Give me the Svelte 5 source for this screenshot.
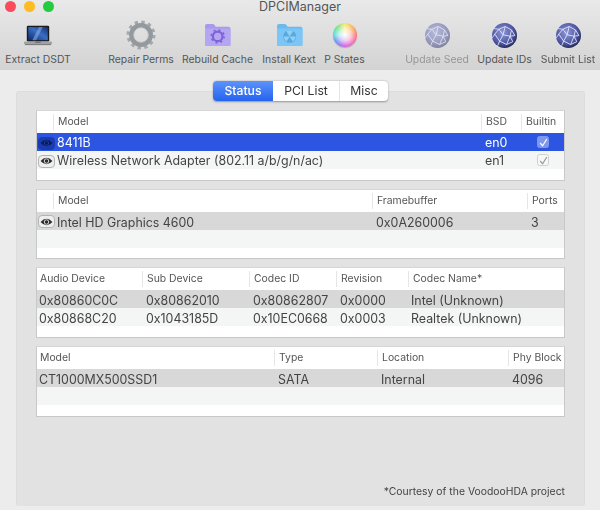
<script>
  const tools = [
    { id: 'laptop', label: 'Extract DSDT', cls: 'w1' },
    { id: 'gear', label: 'Repair Perms', cls: 'w2' },
    { id: 'folderp', label: 'Rebuild Cache', cls: 'w3' },
    { id: 'folderb', label: 'Install Kext', cls: 'w4' },
    { id: 'wheel', label: 'P States', cls: 'w5' },
    { id: 'globe', label: 'Update Seed', cls: 'w6', off: true },
    { id: 'globe', label: 'Update IDs', cls: 'w7' },
    { id: 'globe', label: 'Submit List', cls: 'w8' }
  ];
  const tables = [
    { cls: 't1', head: ['', 'Model', 'BSD', 'Builtin'], rows: [
      { kind: 'sel', cells: ['eye', '8411B', 'en0', 'check'] },
      { kind: 'alt', cells: ['eye', 'Wireless Network Adapter (802.11 a/b/g/n/ac)', 'en1', 'check'] }
    ] },
    { cls: 't2', head: ['', 'Model', 'Framebuffer', 'Ports'], rows: [
      { kind: 'grey', cells: ['eye', 'Intel HD Graphics 4600', '0x0A260006', '3'] },
      { kind: 'alt', cells: [] }
    ] },
    { cls: 't3', head: ['Audio Device', 'Sub Device', 'Codec ID', 'Revision', 'Codec Name*'], rows: [
      { kind: 'grey', cells: ['0x80860C0C', '0x80862010', '0x80862807', '0x0000', 'Intel (Unknown)'] },
      { kind: 'alt', cells: ['0x80868C20', '0x1043185D', '0x10EC0668', '0x0003', 'Realtek (Unknown)'] }
    ] },
    { cls: 't4', head: ['Model', 'Type', 'Location', 'Phy Block'], rows: [
      { kind: 'grey', cells: ['CT1000MX500SSD1', 'SATA', 'Internal', '4096'] },
      { kind: 'alt', cells: [] }
    ] }
  ];
  const globeLines = 'M10 9 L19 5 L28 10 L26 19 L16 17 Z M16 17 L11 26 L21 31 L26 19 M10 9 L4 16 L11 26 M28 10 L33 18 L26 19 M21 31 L30 27 L26 19 M19 5 L16 17 M10 9 L2 8 M4 16 L0 22 M11 26 L8 33';
</script>

{#snippet icon(id)}
  {#if id === 'laptop'}
    <svg class="ic" width="28" height="21" viewBox="0 0 30 22">
      <defs>
        <linearGradient id="scr" x1="0" y1="1" x2="1" y2="0">
          <stop offset="0" stop-color="#0d2a6b" /><stop offset=".55" stop-color="#3a6fc4" /><stop offset="1" stop-color="#16306e" />
        </linearGradient>
      </defs>
      <rect x="3" y="0.5" width="24" height="17" rx="1.5" fill="#1b1b1f" />
      <rect x="4.5" y="2" width="21" height="14" fill="url(#scr)" />
      <path d="M9 16 L16 2 H20 L13 16 Z" fill="#8fb0e6" opacity=".55" />
      <rect x="0" y="17.5" width="30" height="3" rx="1.2" fill="#a2a2a4" />
      <rect x="12" y="17.5" width="6" height="1.4" fill="#6e6e70" />
      <rect x="1" y="20.3" width="28" height="1" fill="#6f6f70" />
    </svg>
  {:else if id === 'gear'}
    <svg class="ic" width="30" height="30" viewBox="0 0 32 32">
      <circle cx="16" cy="16" r="13" fill="none" stroke="#a4a9ad" stroke-width="5" stroke-dasharray="3.4 3.4" />
      <circle cx="16" cy="16" r="10.2" fill="none" stroke="#94999d" stroke-width="5" />
      <circle cx="16" cy="16" r="7.6" fill="none" stroke="#cfd2d4" stroke-width="1" />
    </svg>
  {:else if id === 'folderp' || id === 'folderb'}
    {@const purple = id === 'folderp'}
    <svg class="ic" width="29" height="24" viewBox="0 0 29 26">
      <path d="M1 3 Q1 1 3 1 H9 Q10.5 1 11.5 2.5 L12.5 4 H26.5 Q28.5 4 28.5 6 V23.5 Q28.5 25 27 25 H2.5 Q1 25 1 23.5 Z" fill={purple ? '#a899ec' : '#6db9ef'} />
      <path d="M1 6 H28.5 V23.5 Q28.5 25 27 25 H2.5 Q1 25 1 23.5 Z" fill={purple ? '#b5a6f4' : '#7cc6f7'} />
      {#if purple}
        <circle cx="14.7" cy="14.5" r="5.2" fill="none" stroke="#7e63d6" stroke-width="2.4" />
        <circle cx="14.7" cy="14.5" r="7" fill="none" stroke="#7e63d6" stroke-width="1.8" stroke-dasharray="2.2 3.3" />
      {:else}
        <circle cx="14.7" cy="14.5" r="7" fill="#5aa8dc" />
        <path d="M14.7 14.5 L11 9 A6.5 6.5 0 0 1 18.4 9 Z M14.7 14.5 L21.2 14.5 A6.5 6.5 0 0 1 18 20 Z M14.7 14.5 L11.4 20 A6.5 6.5 0 0 1 8.2 14.5 Z" fill="#8fd0f7" />
      {/if}
    </svg>
  {:else if id === 'wheel'}
    <div class="ic wheel"></div>
  {:else}
    <svg class="ic" width="25" height="25" viewBox="0 0 36 36">
      <defs>
        <radialGradient id="gl" cx=".42" cy=".38" r=".68">
          <stop offset="0" stop-color="#8f97d8" /><stop offset=".65" stop-color="#4f57a4" /><stop offset="1" stop-color="#1c2048" />
        </radialGradient>
        <clipPath id="gc"><circle cx="18" cy="18" r="18" /></clipPath>
      </defs>
      <circle cx="18" cy="18" r="18" fill="url(#gl)" />
      <path d={globeLines} clip-path="url(#gc)" fill="none" stroke="#eceefa" stroke-width="1.2" />
    </svg>
  {/if}
{/snippet}

<div class="win">
  <header class="top">
    <div class="titlebar">
      <span class="dot red"></span><span class="dot yellow"></span><span class="dot green"></span>
      <span class="title">DPCIManager</span>
    </div>
    <div class="toolbar">
      {#each tools as t}
        <div class="tool {t.cls}" class:off={t.off}>
          <div class="iconbox">{@render icon(t.id)}</div>
          <span>{t.label}</span>
        </div>
      {/each}
    </div>
  </header>

  <main class="body">
    <div class="tabs">
      <span class="tab active st">Status</span>
      <span class="tab pci">PCI List</span>
      <span class="tab misc">Misc</span>
    </div>
    <section class="panel">
      {#each tables as tb}
        <div class="table {tb.cls}">
          <div class="head">
            {#each tb.head as h, i}
              <div class="hc" class:sep={i > 0}>{h}</div>
            {/each}
          </div>
          {#each tb.rows as r}
            <div class="row {r.kind}">
              {#each r.cells as c}
                {#if c === 'eye'}
                  <div class="eyecell">
                    <span class="eyebtn">
                      <svg width="13" height="8" viewBox="0 0 14 9">
                        <path d="M0.3 4.5 Q7 -2.8 13.7 4.5 Q7 11.8 0.3 4.5 Z" fill="currentColor" />
                        <circle cx="7" cy="4.5" r="2.5" fill="none" stroke="var(--eye-bg)" stroke-width="1" />
                      </svg>
                    </span>
                  </div>
                {:else if c === 'check'}
                  <div class="checkcell">
                    <span class="check">
                      <svg width="9" height="9" viewBox="0 0 9 9"><path d="M1.2 5 L3.6 7.8 L7.8 1" fill="none" stroke="currentColor" stroke-width="1.2" /></svg>
                    </span>
                  </div>
                {:else}
                  <div class="cell">{c}</div>
                {/if}
              {/each}
            </div>
          {/each}
        </div>
      {/each}
      <p class="note">*Courtesy of the VoodooHDA project</p>
    </section>
  </main>
</div>

<style>
  :global(body) { margin: 0; background: #ececec; }
  .win {
    width: 600px; height: 510px; overflow: hidden; display: flex; flex-direction: column;
    font-family: Inter, "Liberation Sans", sans-serif; color: #3c3c3c; filter: blur(0.35px);
  }
  .top {
    height: 70px; flex: none; background: linear-gradient(#e9e9e9, #d3d3d3);
    display: flex; flex-direction: column;
  }
  .titlebar { height: 16px; display: flex; align-items: center; gap: 8px; padding: 0 0 4px 5px; position: relative; box-sizing: border-box; flex: none; }
  .dot { width: 11px; height: 11px; border-radius: 50%; flex: none; }
  .red { background: #fb4a5c; }
  .yellow { background: #fdbb24; }
  .green { background: #22cc3f; }
  .title { position: absolute; left: 0; right: 0; top: 0; text-align: center; font-size: 12.5px; line-height: 14px; color: #555; }
  .toolbar { display: flex; padding-left: 5px; flex: 1; }
  .tool { display: flex; flex-direction: column; align-items: center; flex: none; font-size: 10.4px; color: #555; white-space: nowrap; }
  .tool.off { opacity: .5; }
  .iconbox { height: 37px; display: flex; align-items: center; justify-content: center; padding-top: 1px; box-sizing: border-box; }
  .tool span { line-height: 14px; }
  .ic { display: block; }
  .w1 { width: 66px; margin-right: 37px; }
  .w2 { width: 66px; margin-right: 8px; }
  .w3 { width: 71px; margin-right: 9px; }
  .w4 { width: 54px; margin-right: 8px; }
  .w5 { width: 41px; margin-right: 40px; }
  .w6 { width: 64px; margin-right: 8px; }
  .w7 { width: 55px; margin-right: 8px; }
  .w8 { width: 56px; }
  .wheel {
    width: 24px; height: 24px; border-radius: 50%;
    background:
      radial-gradient(circle, #fff 0%, rgba(255,255,255,.7) 35%, rgba(255,255,255,0) 78%),
      conic-gradient(#f9e34b, #f9a23b 45deg, #f9605f 90deg, #ee45c0 150deg, #a04fe8 200deg, #4f7cf0 235deg, #3fd0e0 270deg, #55e06f 315deg, #f9e34b);
    box-shadow: 0 1px 1px rgba(0,0,0,.2);
  }
  .body { flex: 1; display: flex; flex-direction: column; padding: 11px 15px 4px 16px; min-height: 0; }
  .tabs {
    align-self: center; display: flex; height: 20px; position: relative; z-index: 1;
    background: #fff; border-radius: 4px; box-shadow: 0 0.5px 2px rgba(0,0,0,.35);
    font-size: 12.2px; line-height: 20px; color: #333; flex: none;
  }
  .tab { text-align: center; box-sizing: border-box; }
  .st { width: 60px; }
  .pci { width: 66px; }
  .misc { width: 49px; border-left: 1px solid #e4e4e4; }
  .active { color: #fff; background: linear-gradient(#5c93fb, #2563ee); border-radius: 4px 0 0 4px; font-weight: 500; }
  .panel {
    flex: 1; margin-top: -10px; padding: 18px 19px 0 19px; display: flex; flex-direction: column; gap: 8px;
    background: #e2e2e2; border-radius: 3px; border: 1px solid #dcdcdc; border-bottom: 0; box-sizing: border-box; min-height: 0;
  }
  .table { height: 70.7px; background: #fff; border: 1px solid #c8c8c8; border-top-color: #d6d6d6; box-sizing: border-box; flex: none; overflow: hidden; }
  .t1 { --cols: 16px 428px 40px 1fr; --nudge: 1px; }
  .t2 { --cols: 16px 319px 155px 1fr; --nudge: 2px; }
  .t3 { --cols: 105px 107px 87px 72px 1fr; --nudge: 2px; }
  .t4 { --cols: 237px 103px 131px 1fr; --nudge: 2px; }
  .head, .row { display: grid; grid-template-columns: var(--cols); }
  .head { height: 22px; align-items: center; font-size: 10.4px; color: #555; }
  .hc { padding-left: 4px; height: 16px; line-height: 16px; white-space: nowrap; box-sizing: border-box; }
  .hc.sep { border-left: 1px solid #e6e6e6; }
  .t3 .hc:first-child, .t4 .hc:first-child { padding-left: 3px; }
  .row { height: 18px; align-items: start; font-size: 12.4px; line-height: 18px; color: #444; --eye-bg: #eee; }
  .sel { background: #2c56e2; color: #fff; --eye-bg: #1b3cb0; }
  .grey { background: #d8d8d8; }
  .alt { background: #f4f5f5; }
  .cell { padding: var(--nudge) 0 0 4px; height: 18px; box-sizing: border-box; white-space: nowrap; }
  .t3 .cell:first-child, .t4 .cell:first-child { padding-left: 2px; }
  .t3 .cell:last-child { padding-left: 3px; }
  .eyecell { display: flex; justify-content: flex-start; height: 18px; align-items: center; }
  .eyebtn { width: 17px; height: 13px; margin: 2px 0 0 1px; flex: none; border-radius: 4px; border: 1px solid #b4b4b4; box-sizing: border-box; display: flex; align-items: center; justify-content: center; color: #2c2c2c; background: var(--eye-bg); }
  .sel .eyebtn { border-color: #1b3cb0; color: #0c1a55; }
  .checkcell { display: flex; justify-content: center; align-items: center; height: 18px; padding-left: 1px; }
  .check { width: 12px; height: 12px; border-radius: 2.5px; background: #f7f7f7; border: 1px solid #d0d0d0; box-sizing: border-box; display: flex; align-items: center; justify-content: center; color: #9a9a9a; }
  .sel .check { background: #7f96ee; border-color: #7f96ee; color: #fff; }
  .note { margin: auto 0 7px 0; text-align: right; font-size: 10.4px; line-height: 14px; color: #444; }
</style>
